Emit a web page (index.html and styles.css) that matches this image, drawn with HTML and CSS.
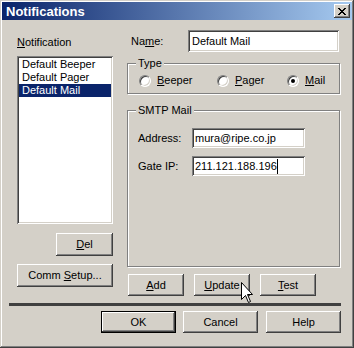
FILE: index.html
```html
<!DOCTYPE html>
<html lang="en">
<head>
    <meta charset="UTF-8">
    <title>Notifications</title>
    <link rel="stylesheet" href="styles.css">
</head>
<body>
    <div class="window">
        <div class="titlebar">
            <span class="title">Notifications</span>
            <span class="close">
                <svg width="8" height="7" viewBox="0 0 8 7"><path d="M0 0L7 7M1 0L8 7M7 0L0 7M8 0L1 7" stroke="#000" stroke-width="1" shape-rendering="crispEdges"/></svg>
            </span>
        </div>

        <div class="main">
            <div class="left">
                <div class="label"><u>N</u>otification</div>
                <div class="listbox">
                    <div class="item">Default Beeper</div>
                    <div class="item">Default Pager</div>
                    <div class="item selected">Default Mail</div>
                </div>
                <div class="btn btn-del"><span><u>D</u>el</span></div>
                <div class="btn btn-comm"><span>Comm <u>S</u>etup...</span></div>
            </div>

            <div class="right">
                <div class="name-row">
                    <span class="name-label">Na<u>m</u>e:</span>
                    <div class="field field-name">Default Mail</div>
                </div>

                <div class="group group-type">
                    <span class="group-title">Type</span>
                    <div class="radios">
                        <div class="radio radio-beeper"><span class="dot"></span><span><u>B</u>eeper</span></div>
                        <div class="radio radio-pager"><span class="dot"></span><span><u>P</u>ager</span></div>
                        <div class="radio"><span class="dot checked"></span><span><u>M</u>ail</span></div>
                    </div>
                </div>

                <div class="group group-smtp">
                    <span class="group-title">SMTP Mail</span>
                    <div class="form-row">
                        <span class="form-label">Address:</span>
                        <div class="field field-small">mura@ripe.co.jp</div>
                    </div>
                    <div class="form-row">
                        <span class="form-label">Gate IP:</span>
                        <div class="field field-small">211.121.188.196<span class="caret"></span></div>
                    </div>
                </div>

                <div class="row-buttons">
                    <div class="btn btn-small"><span><u>A</u>dd</span></div>
                    <div class="btn btn-small btn-update">
                        <span><u>U</u>pdate</span>
                        <svg class="cursor" width="13" height="21" viewBox="0 0 13 21"><path d="M0.5 0.5V17.5L4.5 13.5L7.5 20.5L9.5 19.5L6.5 12.5H11.5Z" fill="#fff" stroke="#000" stroke-width="1"/></svg>
                    </div>
                    <div class="btn btn-small"><span><u>T</u>est</span></div>
                </div>
            </div>
        </div>

        <div class="separator"></div>

        <div class="actions">
            <div class="btn btn-action btn-default"><span>OK</span></div>
            <div class="btn btn-action"><span>Cancel</span></div>
            <div class="btn btn-action btn-help"><span>Help</span></div>
        </div>
    </div>
</body>
</html>
```

FILE: styles.css
```css
body {
    margin: 0;
    padding: 0;
    font-family: "Liberation Sans", Arial, sans-serif;
    font-size: 11px;
    line-height: 13px;
    color: #000;
    background: #d4d0c8;
}
u {
    text-decoration: underline;
    text-underline-offset: 1px;
}
.window {
    width: 354px;
    height: 348px;
    box-sizing: border-box;
    padding: 2px;
    background: #d4d0c8;
    box-shadow: inset -1px -1px #404040, inset 1px 1px #d4d0c8, inset -2px -2px #808080, inset 2px 2px #fff;
    display: flex;
    flex-direction: column;
}
.titlebar {
    height: 18px;
    background: linear-gradient(to right, #0a246a, #a6caf0);
    display: flex;
    align-items: center;
    justify-content: space-between;
    padding: 0 2px 0 4px;
}
.title {
    color: #fff;
    font-weight: bold;
    font-size: 13px;
}
.close {
    width: 16px;
    height: 14px;
    background: #d4d0c8;
    box-shadow: inset -1px -1px #404040, inset 1px 1px #fff, inset -2px -2px #808080;
    display: flex;
    align-items: center;
    justify-content: center;
}
.main {
    display: flex;
    align-items: flex-start;
    gap: 14px;
    padding-left: 15px;
}
.left {
    width: 96px;
    padding-top: 16px;
    display: flex;
    flex-direction: column;
}
.listbox {
    margin-top: 7px;
    height: 168px;
    box-sizing: border-box;
    padding: 2px;
    background: #fff;
    box-shadow: inset 1px 1px #808080, inset -1px -1px #fff, inset 2px 2px #404040, inset -2px -2px #d4d0c8;
}
.item {
    height: 13px;
    padding-left: 3px;
    white-space: nowrap;
}
.item.selected {
    background: #0a246a;
    color: #fff;
}
.btn {
    box-sizing: border-box;
    display: flex;
    align-items: center;
    justify-content: center;
    background: #d4d0c8;
    box-shadow: inset -1px -1px #404040, inset 1px 1px #fff, inset -2px -2px #808080;
    white-space: nowrap;
}
.btn-del {
    margin-top: 9px;
    margin-left: auto;
    width: 57px;
    height: 23px;
}
.btn-comm {
    margin-top: 8px;
    width: 96px;
    height: 23px;
}
.right {
    width: 214px;
    padding-top: 10px;
}
.name-row {
    display: flex;
    align-items: center;
}
.name-label {
    width: 57px;
    padding-left: 4px;
}
.field {
    box-sizing: border-box;
    background: #fff;
    box-shadow: inset 1px 1px #808080, inset -1px -1px #fff, inset 2px 2px #404040, inset -2px -2px #d4d0c8;
    display: flex;
    align-items: center;
    white-space: nowrap;
}
.field-name {
    width: 151px;
    height: 22px;
    padding-left: 4px;
}
.group {
    position: relative;
    width: 213px;
    box-sizing: border-box;
    border: 1px solid #808080;
    box-shadow: inset 1px 1px #fff, 1px 1px #fff;
}
.group-title {
    position: absolute;
    top: -7px;
    left: 8px;
    padding: 0 2px;
    background: #d4d0c8;
}
.group-type {
    margin-top: 11px;
    height: 31px;
    padding: 10px 0 0 11px;
}
.radios {
    display: flex;
    align-items: center;
}
.radio {
    display: flex;
    align-items: center;
    gap: 6px;
}
.radio-beeper {
    width: 78px;
}
.radio-pager {
    width: 70px;
}
.dot {
    width: 12px;
    height: 12px;
    box-sizing: border-box;
    border-radius: 50%;
    background: #fff;
    border: 1px solid;
    border-color: #808080 #fff #fff #808080;
    box-shadow: inset 1px 1px #404040, inset -1px -1px #d4d0c8;
    display: flex;
    align-items: center;
    justify-content: center;
}
.dot.checked::after {
    content: "";
    width: 4px;
    height: 4px;
    border-radius: 50%;
    background: #000;
}
.group-smtp {
    margin-top: 16px;
    height: 157px;
    padding: 17px 0 0 10px;
}
.form-row {
    display: flex;
    align-items: center;
    margin-bottom: 8px;
}
.form-label {
    width: 54px;
}
.field-small {
    width: 113px;
    height: 20px;
    padding-left: 3px;
}
.caret {
    width: 1px;
    height: 15px;
    background: #000;
}
.row-buttons {
    display: flex;
    gap: 10px;
    margin: 7px 0 0 1px;
}
.btn-small {
    width: 56px;
    height: 22px;
}
.btn-update {
    position: relative;
}
.cursor {
    position: absolute;
    left: 47px;
    top: 8px;
}
.separator {
    margin: 7px 11px 0 7px;
    height: 3px;
    background: #404040;
}
.actions {
    display: flex;
    justify-content: flex-end;
    gap: 7px;
    margin-top: 5px;
    padding-right: 11px;
}
.btn-action {
    width: 75px;
    height: 22px;
}
.btn-help {
    margin-left: 1px;
}
.btn-default {
    border: 1px solid #000;
}
```
